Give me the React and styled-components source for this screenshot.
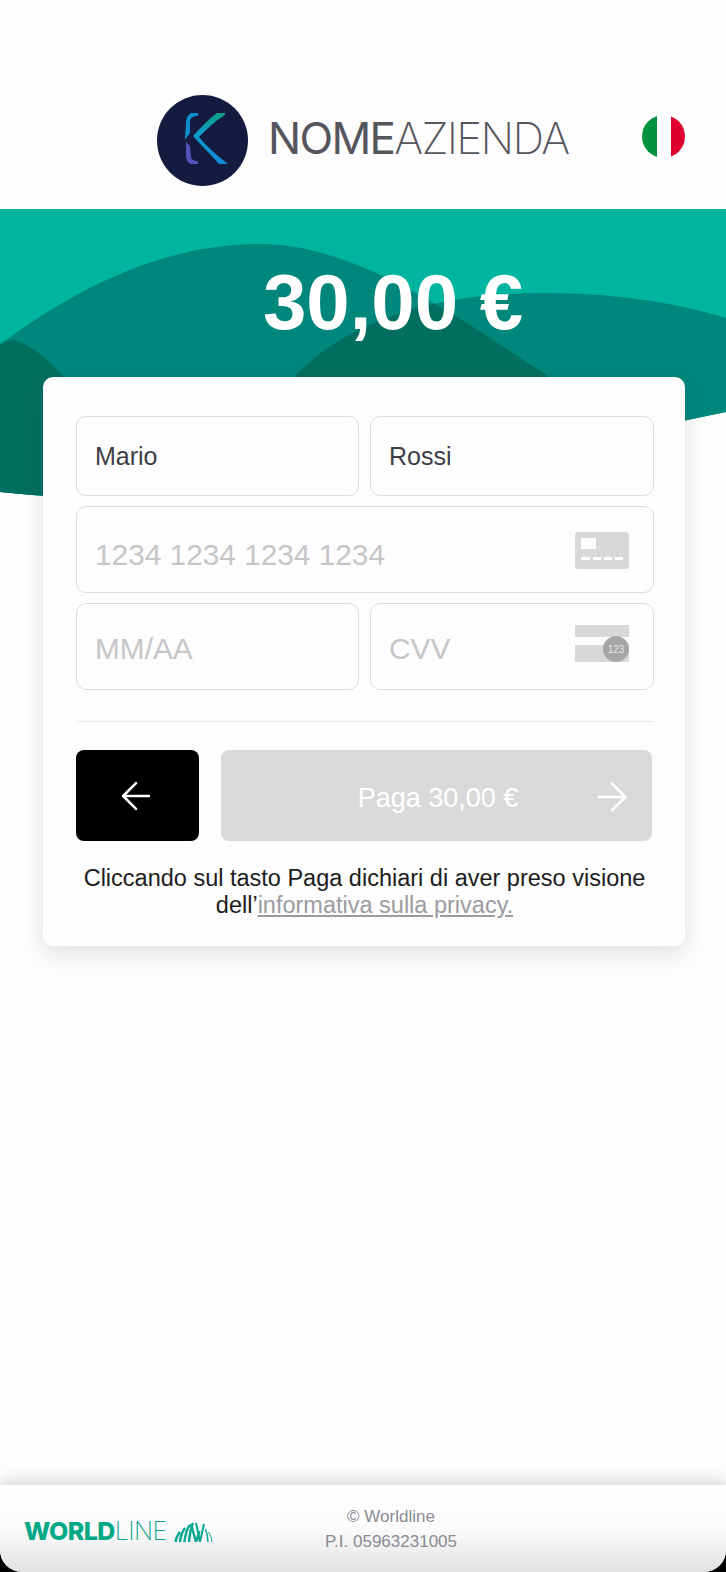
import React from 'react';
import styled, { createGlobalStyle } from 'styled-components';
import { ArrowLeft, ArrowRight } from 'lucide-react';

const GlobalStyle = createGlobalStyle`
  html, body {
    margin: 0;
    padding: 0;
    background: #000;
  }
  * {
    box-sizing: border-box;
  }
`;

const Page = styled.div`
  display: flex;
  flex-direction: column;
  width: 726px;
  height: 1572px;
  overflow: hidden;
  background: #fdfdfd;
  border-radius: 0 0 22px 22px;
  font-family: "Liberation Sans", Arial, sans-serif;
`;

const Header = styled.header`
  display: flex;
  align-items: center;
  justify-content: space-between;
  height: 209px;
  padding: 95px 41px 23px 157px;
`;

const Brand = styled.div`
  display: flex;
  align-items: center;
  gap: 20px;
`;

const BrandName = styled.div`
  margin-bottom: 6px;
  font-family: Inter, "Liberation Sans", sans-serif;
  font-size: 44px;
  font-weight: 200;
  letter-spacing: -1.7px;
  color: #55555d;
  line-height: 1;
  strong {
    font-weight: 400;
  }
`;

const Flag = styled.svg`
  width: 43px;
  height: 43px;
  margin-bottom: 8px;
`;

const Hero = styled.section`
  position: relative;
  height: 291px;
  padding: 51px 0 0 60px;
  text-align: center;
`;

const Waves = styled.svg`
  position: absolute;
  top: 0;
  left: 0;
  width: 726px;
  height: 291px;
`;

const Amount = styled.h1`
  position: relative;
  margin: 0;
  font-size: 78px;
  line-height: 84px;
  font-weight: 700;
  color: #fff;
`;

const Card = styled.main`
  position: relative;
  width: 642px;
  height: 569px;
  margin: -123px 0 0 43px;
  padding: 39px 32px 0 33px;
  background: #fdfdfd;
  border-radius: 10px;
  box-shadow: 0 6px 22px rgba(60, 60, 90, 0.16);
`;

const Fields = styled.div`
  display: grid;
  grid-template-columns: 283px 284px;
  grid-template-rows: 80px 87px 87px;
  gap: 10px 11px;
`;

const Field = styled.div`
  display: flex;
  align-items: center;
  justify-content: space-between;
  grid-column: ${({ $wide }) => ($wide ? '1 / 3' : 'auto')};
  padding: ${({ $drop }) => $drop || 0}px 24px 0 18px;
  border: 1.5px solid #dcdce4;
  border-radius: 10px;
`;

const Value = styled.span`
  font-size: 25px;
  color: #3d3d47;
`;

const Placeholder = styled.span`
  font-size: 29.8px;
  color: #c6c6c8;
`;

const Divider = styled.hr`
  height: 1px;
  margin: 31px 0 28px;
  border: 0;
  background: #eaeaea;
`;

const Actions = styled.div`
  display: flex;
  gap: 22px;
  height: 91px;
`;

const BackButton = styled.button`
  display: flex;
  align-items: center;
  justify-content: center;
  width: 123px;
  padding: 0 3px 0 0;
  border: 0;
  border-radius: 8px;
  background: #000;
  color: #fff;
`;

const PayButton = styled.button`
  position: relative;
  display: flex;
  align-items: center;
  justify-content: center;
  width: 431px;
  padding: 5px 0 0 3px;
  border: 0;
  border-radius: 8px;
  background: #d9d9d9;
  color: #fff;
  font-family: inherit;
  font-size: 27px;
  svg {
    position: absolute;
    top: 24px;
    right: 17px;
  }
`;

const Note = styled.p`
  margin: 24px 0 0 1px;
  width: 575px;
  font-size: 23.5px;
  line-height: 27px;
  text-align: center;
  color: #1c1c20;
  a {
    color: #9b9ba0;
  }
`;

const Main = styled.div`
  flex: 1;
`;

const Footer = styled.footer`
  display: flex;
  align-items: center;
  height: 87px;
  padding: 0 0 0 24px;
  background: linear-gradient(#fff 0%, #fbfbfb 50%, #e2e2e2 100%);
  box-shadow: 0 -4px 14px rgba(0, 0, 0, 0.16);
`;

const WorldlineLogo = styled.div`
  display: flex;
  align-items: center;
  gap: 7px;
  width: 256px;
  padding-top: 6px;
`;

const WorldlineName = styled.span`
  font-family: Inter, "Liberation Sans", sans-serif;
  font-size: 25px;
  line-height: 1;
  font-weight: 200;
  letter-spacing: -0.6px;
  color: #13a593;
  strong {
    font-weight: 800;
    color: #00a886;
  }
`;

const Legal = styled.div`
  width: 222px;
  font-size: 17px;
  line-height: 25px;
  text-align: center;
  color: #8b8b93;
`;

const hillOne = 'M0 135 C 60 92 150 35 259 35 C 350 35 440 95 546 166 L620 291 H0 Z';
const hillTwo = 'M296 166 C 340 120 420 84 540 84 C 610 84 670 92 726 109 V291 H230 Z';

const App = () => {
  return (
    <>
      <GlobalStyle />
      <Page>
        <Header>
          <Brand>
            <svg width="91" height="91" viewBox="0 0 91 91">
              <defs>
                <linearGradient id="arm" x1="0" y1="0" x2="0" y2="1">
                  <stop offset="0" stopColor="#0f9c80" />
                  <stop offset="0.4" stopColor="#0c9ccc" />
                  <stop offset="1" stopColor="#1189d6" />
                </linearGradient>
              </defs>
              <circle cx="45.5" cy="45.5" r="45.5" fill="#151b3f" />
              <path d="M41 18 L34 18 C 31 20 29 23 29 27 L28 45 L33 38 L33 27 C 33 23 36 21 41 21 Z" fill="#0d8dcc" />
              <path d="M29 47 L33 51 L34 62 C 35 65 37 66 41 66 L41 69 L34 69 C 31 68 30 66 29 62 Z" fill="#5552bd" />
              <path d="M68 18 L60 18 C 52 24 44 32 36 41 C 44 50 54 60 62 69 L71 69 C 60 60 50 52 42 42 C 50 34 58 26 68 20 Z" fill="url(#arm)" />
            </svg>
            <BrandName>
              <strong>NOME</strong>AZIENDA
            </BrandName>
          </Brand>
          <Flag viewBox="0 0 43 43">
            <defs>
              <clipPath id="flagClip">
                <circle cx="21.5" cy="21.5" r="21.5" />
              </clipPath>
            </defs>
            <g clipPath="url(#flagClip)">
              <rect width="15" height="43" fill="#00923f" />
              <rect x="15" width="14" height="43" fill="#fff" />
              <rect x="29" width="14" height="43" fill="#e0002d" />
            </g>
          </Flag>
        </Header>

        <Hero>
          <Waves viewBox="0 0 726 291">
            <defs>
              <clipPath id="band">
                <path d="M0 0 H726 V203 C 500 250 250 310 0 283 Z" />
              </clipPath>
              <clipPath id="hillOneClip">
                <path d={hillOne} />
              </clipPath>
            </defs>
            <g clipPath="url(#band)">
              <rect width="726" height="291" fill="#00b5a0" />
              <path d={hillOne} fill="#00877b" />
              <path d={hillTwo} fill="#00877b" />
              <g clipPath="url(#hillOneClip)">
                <path d={hillTwo} fill="#006f5f" />
              </g>
              <path d="M0 136 C 5 132 10 131 14 131 C 30 135 48 150 64 168 L80 291 H0 Z" fill="#006f5f" />
            </g>
          </Waves>
          <Amount>30,00 €</Amount>
        </Hero>

        <Card>
          <Fields>
            <Field>
              <Value>Mario</Value>
            </Field>
            <Field>
              <Value>Rossi</Value>
            </Field>
            <Field $wide $drop={10}>
              <Placeholder>1234 1234 1234 1234</Placeholder>
              <svg width="54" height="37" viewBox="0 0 54 37" style={{ marginTop: -8 }}>
                <rect width="54" height="37" rx="3" fill="#d8d8d8" />
                <rect x="6" y="6" width="15" height="11" fill="#fdfdfd" />
                <rect x="6" y="25" width="9" height="3" fill="#fdfdfd" />
                <rect x="18" y="25" width="8" height="3" fill="#fdfdfd" />
                <rect x="29" y="25" width="8" height="3" fill="#fdfdfd" />
                <rect x="40" y="25" width="8" height="3" fill="#fdfdfd" />
              </svg>
            </Field>
            <Field $drop={5}>
              <Placeholder>MM/AA</Placeholder>
            </Field>
            <Field $drop={5}>
              <Placeholder>CVV</Placeholder>
              <svg width="54" height="38" viewBox="0 0 54 38" style={{ marginTop: -11 }}>
                <rect y="0" width="54" height="12" fill="#d8d8d8" />
                <rect y="20" width="54" height="17" fill="#d8d8d8" />
                <circle cx="41" cy="24" r="13" fill="#a6a6a6" />
                <text x="41" y="27.5" fontSize="10" textAnchor="middle" fill="#e4e4e4" fontFamily="Liberation Sans, sans-serif">123</text>
              </svg>
            </Field>
          </Fields>

          <Divider />

          <Actions>
            <BackButton>
              <ArrowLeft size={44} strokeWidth={1.4} />
            </BackButton>
            <PayButton>
              Paga 30,00 €
              <ArrowRight size={46} strokeWidth={1.3} />
            </PayButton>
          </Actions>

          <Note>
            Cliccando sul tasto Paga dichiari di aver preso visione dell’<a href="#privacy">informativa sulla privacy.</a>
          </Note>
        </Card>

        <Main />

        <Footer>
          <WorldlineLogo>
            <WorldlineName>
              <strong>WORLD</strong>LINE
            </WorldlineName>
            <svg width="39" height="20" viewBox="0 0 39 20" fill="none" stroke="#00a88f" strokeWidth="2.4">
              <path d="M1.5 20 C 2 16 3.5 13 6 10" />
              <path d="M6 20 C 6.5 15 8 10 11 6" />
              <path d="M10.5 20 C 11 14 12.5 8 15.5 3" />
              <path d="M15 20 C 15.5 13 16.5 7 19 1" />
              <path d="M17 2 L22 20 L25.5 9" />
              <path d="M22 1 L26 20 L30 2" strokeWidth="2" />
              <path d="M31.5 7 C 33 11 33.8 15 34 20" strokeWidth="1.4" />
              <path d="M34.5 10 C 36.5 13 37.6 16 38 20" strokeWidth="1" />
            </svg>
          </WorldlineLogo>
          <Legal>
            <div>© Worldline</div>
            <div>P.I. 05963231005</div>
          </Legal>
        </Footer>
      </Page>
    </>
  );
};

export default App;
